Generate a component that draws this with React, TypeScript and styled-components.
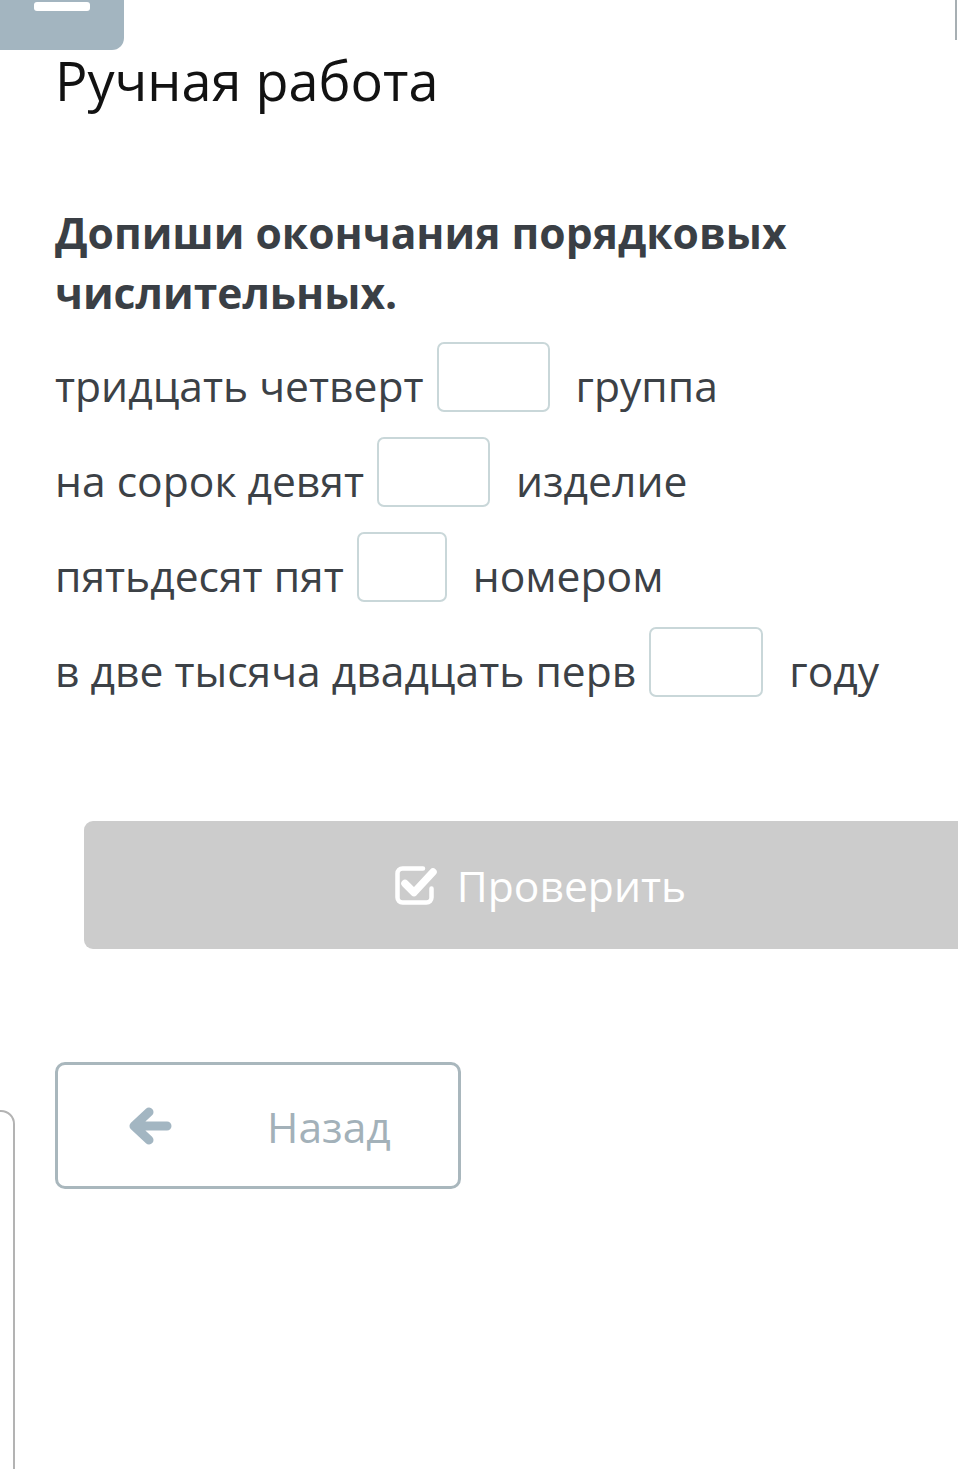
import React from "react";
import styled, { createGlobalStyle } from "styled-components";

const Global = createGlobalStyle`
  html, body { margin: 0; padding: 0; background: #ffffff; }
  body { font-family: "Open Sans", "Noto Sans", sans-serif; overflow: hidden; }
  * { box-sizing: border-box; }
`;

const Page = styled.div`
  position: relative;
  width: 958px;
  height: 1469px;
  overflow: hidden;
  background: #fff;
`;

const MenuTab = styled.div`
  width: 124px;
  height: 50px;
  background: #a3b5c0;
  border-bottom-right-radius: 12px;
  padding: 2px 0 0 34px;
`;

const MenuBar = styled.div`
  width: 56px;
  height: 9px;
  background: #fff;
  border-radius: 3px;
`;

const EdgeLine = styled.div`
  position: absolute;
  top: 0;
  right: 1px;
  width: 2px;
  height: 40px;
  background: #a7afb3;
`;

const SidePanel = styled.div`
  position: absolute;
  left: -60px;
  top: 1110px;
  width: 75px;
  height: 400px;
  border: 2px solid #b3b3b3;
  border-top-right-radius: 14px;
`;

const Content = styled.div`
  padding: 0 0 0 55px;
`;

const Title = styled.h1`
  margin: 0;
  padding-top: 0;
  font-size: 54px;
  line-height: 60px;
  font-weight: 400;
  color: #121212;
`;

const Task = styled.p`
  margin: 92px 0 0;
  font-size: 42.6px;
  line-height: 60px;
  font-weight: 700;
  color: #3a3f45;
`;

const Rows = styled.div`
  display: flex;
  flex-direction: column;
  gap: 25px;
  margin-top: 20px;
`;

const Row = styled.div`
  display: flex;
  align-items: center;
  height: 70px;
  font-size: 42.6px;
  color: #3c4146;
  white-space: nowrap;
`;

const Word = styled.span`
  padding-top: 16px;
`;

const Blank = styled.input<{ $w: number }>`
  width: ${(p) => p.$w}px;
  height: 70px;
  margin: 0 26px 0 13px;
  border: 2px solid #c9d7d9;
  border-radius: 7px;
  background: #fff;
  outline: none;
  font: inherit;
`;

const CheckButton = styled.button`
  display: flex;
  align-items: center;
  justify-content: center;
  gap: 19px;
  margin: 124px 0 0 29px;
  width: 1020px;
  height: 128px;
  padding: 0 108px 0 0;
  border: none;
  border-radius: 9px;
  background: #cccccc;
  color: #fff;
  font-family: inherit;
  font-size: 42.6px;
  font-weight: 400;
`;

const BackButton = styled.button`
  display: flex;
  align-items: center;
  margin-top: 113px;
  width: 406px;
  height: 127px;
  padding: 0 0 0 70px;
  border: 3px solid #a9b7bd;
  border-radius: 10px;
  background: #fff;
  color: #a3b1b9;
  font-family: inherit;
  font-size: 42.6px;
`;

const ArrowSvg = styled.svg`
  flex: none;
  margin-right: 95px;
`;

const CheckIcon = () => (
  <svg width="44" height="42" viewBox="0 0 44 42" fill="none">
    <path
      d="M29 4.5 H8.5 a5 5 0 0 0 -5 5 v24 a5 5 0 0 0 5 5 h24 a5 5 0 0 0 5 -5 v-9"
      stroke="#fff"
      strokeWidth="4.5"
      strokeLinecap="round"
    />
    <path
      d="M11 19.5 L20 28.5 L39 8"
      stroke="#fff"
      strokeWidth="7.5"
      strokeLinecap="round"
      strokeLinejoin="round"
    />
  </svg>
);

const BackArrow = () => (
  <ArrowSvg width="44" height="40" viewBox="0 0 44 40" fill="none">
    <path
      d="M39 20 H8 M21 6 L6 20 L21 34"
      stroke="#a3b6c2"
      strokeWidth="9"
      strokeLinecap="round"
      strokeLinejoin="round"
    />
  </ArrowSvg>
);

const rows = [
  { before: "тридцать четверт", after: "группа", w: 113 },
  { before: "на сорок девят", after: "изделие", w: 113 },
  { before: "пятьдесят пят", after: "номером", w: 90 },
  { before: "в две тысяча двадцать перв", after: "году", w: 114 },
];

export default function App() {
  return (
    <Page>
      <Global />
      <MenuTab>
        <MenuBar />
      </MenuTab>
      <EdgeLine />
      <SidePanel />
      <Content>
        <Title>Ручная работа</Title>
        <Task>
          Допиши окончания порядковых
          <br />
          числительных.
        </Task>
        <Rows>
          {rows.map((r) => (
            <Row key={r.before}>
              <Word>{r.before}</Word>
              <Blank $w={r.w} />
              <Word>{r.after}</Word>
            </Row>
          ))}
        </Rows>
        <CheckButton>
          <CheckIcon />
          Проверить
        </CheckButton>
        <BackButton>
          <BackArrow />
          Назад
        </BackButton>
      </Content>
    </Page>
  );
}
